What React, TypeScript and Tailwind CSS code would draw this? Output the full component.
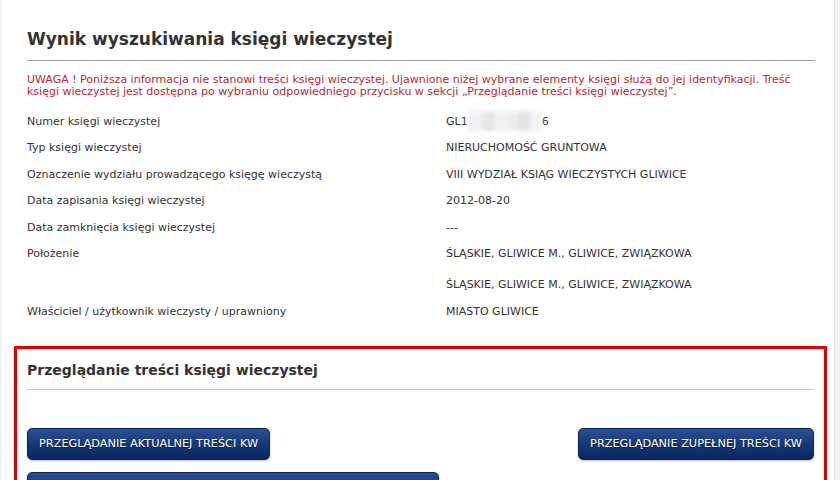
import React from "react"

interface Row {
  label: string
  values: React.ReactNode[]
}

// blurred part of the KW number
function Blurred() {
  return (
    <span className="relative inline-block w-[74px] h-[13px] align-top">
      <span className="absolute left-0 right-0 -top-[4px] -bottom-[3px] flex blur-[2px]">
        <span className="w-[14px] bg-[#f1f1f1]" />
        <span className="w-[12px] bg-[#e6e6e6]" />
        <span className="w-[14px] bg-[#f0f0f0]" />
        <span className="w-[10px] bg-[#ececec]" />
        <span className="w-[12px] bg-[#e3e3e3]" />
        <span className="w-[12px] bg-[#f2f2f2]" />
      </span>
    </span>
  )
}

const rows: Row[] = [
  { label: "Numer księgi wieczystej", values: [<>GL1<Blurred />6</>] },
  { label: "Typ księgi wieczystej", values: ["NIERUCHOMOŚĆ GRUNTOWA"] },
  { label: "Oznaczenie wydziału prowadzącego księgę wieczystą", values: ["VIII WYDZIAŁ KSIĄG WIECZYSTYCH GLIWICE"] },
  { label: "Data zapisania księgi wieczystej", values: ["2012-08-20"] },
  { label: "Data zamknięcia księgi wieczystej", values: ["---"] },
  {
    label: "Położenie",
    values: ["ŚLĄSKIE, GLIWICE M., GLIWICE, ZWIĄZKOWA", "ŚLĄSKIE, GLIWICE M., GLIWICE, ZWIĄZKOWA"],
  },
  { label: "Właściciel / użytkownik wieczysty / uprawniony", values: ["MIASTO GLIWICE"] },
]

function KwButton({ children }: { children: React.ReactNode }) {
  return (
    <button className="h-[32px] px-[11px] rounded-[5px] border border-[#0a2456] bg-gradient-to-b from-[#2b4f92] via-[#163a78] to-[#0a2660] text-white text-[11.3px] leading-none [text-shadow:0_1px_1px_rgba(0,0,0,0.5)] shadow-[0_1px_2px_rgba(0,0,0,0.25)]">
      {children}
    </button>
  )
}

export default function App() {
  return (
    <div className="min-h-screen bg-[#f4f4f4] font-['DejaVu_Sans',Verdana,sans-serif] text-[#333]">
      <div className="ml-[2px] w-[833px] bg-white border-r border-[#e6e6e6] pl-[12px] pr-[6px] pb-10">
        <div className="px-[13px]">
          <h1 className="pt-[28px] text-[17px] leading-[22px] font-bold text-[#333]">
            Wynik wyszukiwania księgi wieczystej
          </h1>
          <hr className="mt-[10px] border-0 h-px bg-[#a3a3a3]" />
          <p className="mt-[13px] text-[11px] leading-[11.5px] text-[#c0282e]">
            UWAGA ! Poniższa informacja nie stanowi treści księgi wieczystej. Ujawnione niżej wybrane elementy księgi
            służą do jej identyfikacji. Treść księgi wieczystej jest dostępna po wybraniu odpowiedniego przycisku w
            sekcji „Przeglądanie treści księgi wieczystej”.
          </p>

          <div className="mt-[11px] text-[11px] leading-[13px]">
            {rows.map((row) => (
              <div key={row.label} className="flex py-[6.75px]">
                <div className="w-[419px] shrink-0">{row.label}</div>
                <div className="flex flex-col gap-[18px]">
                  {row.values.map((v, i) => (
                    <div key={i}>{v}</div>
                  ))}
                </div>
              </div>
            ))}
          </div>
        </div>

        <div className="mt-[21px] border-[3px] border-[#e10000] w-[813px] px-[10px] pb-6">
          <h2 className="pt-[12px] text-[14px] leading-[18px] font-bold text-[#333]">
            Przeglądanie treści księgi wieczystej
          </h2>
          <hr className="mt-[10px] border-0 h-px bg-[#cccccc]" />
          <div className="mt-[38px] flex justify-between">
            <KwButton>PRZEGLĄDANIE AKTUALNEJ TREŚCI KW</KwButton>
            <KwButton>PRZEGLĄDANIE ZUPEŁNEJ TREŚCI KW</KwButton>
          </div>
          <div className="mt-[12px] flex">
            <KwButton>PRZEGLĄDANIE TREŚCI KW W WERSJI DO WYDRUKU - DZIAŁ I-O, I-SP</KwButton>
          </div>
        </div>
      </div>
    </div>
  )
}
